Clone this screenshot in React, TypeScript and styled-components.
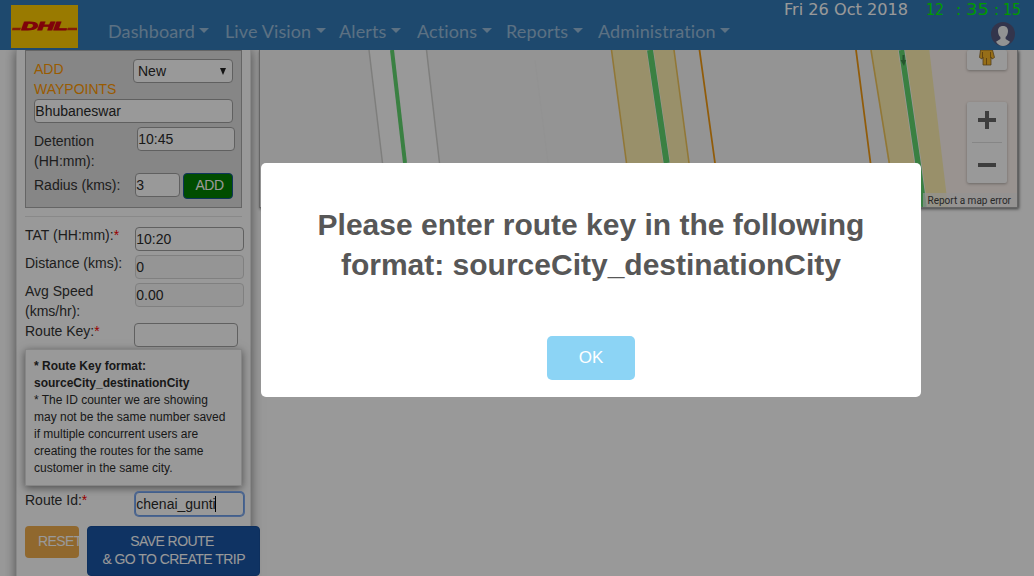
import React from "react";
import styled, { createGlobalStyle } from "styled-components";

const GlobalStyle = createGlobalStyle`
  * { box-sizing: border-box; }
  html, body { margin: 0; padding: 0; background: #fff; }
  body { font-family: "Liberation Sans", Arial, sans-serif; overflow: hidden; }
`;

const Page = styled.div`
  position: relative;
  width: 1034px;
  height: 576px;
  overflow: hidden;
  background: #fff;
  font-size: 14px;
  line-height: 20px;
  color: #333;
`;

/* ---------- Header ---------- */
const Navbar = styled.header`
  position: relative;
  z-index: 1;
  display: flex;
  height: 50px;
  background: #337ab7;
`;

const Logo = styled.svg`
  display: block;
  flex: none;
  width: 67px;
  height: 43px;
  margin: 5px 0 0 11px;
`;

const Menu = styled.nav`
  display: flex;
  flex: none;
  margin: 18px 0 0 30px;
  font: 18px/27px Lato, sans-serif;
  letter-spacing: 0.12px;
  color: rgba(255, 255, 255, 0.5);
`;

const MenuItem = styled.div<{ $width: number }>`
  flex: none;
  width: ${(p) => p.$width}px;
  white-space: nowrap;

  &::after {
    content: "";
    display: inline-block;
    margin-left: 4.6px;
    vertical-align: 4.6px;
    border-top: 5.4px solid;
    border-left: 5.4px solid transparent;
    border-right: 5.4px solid transparent;
  }
`;

const Status = styled.div`
  flex: 1;
  display: flex;
  flex-direction: column;
  align-items: flex-end;
  padding-right: 12px;
`;

const Clock = styled.div`
  display: flex;
  height: 20px;
  gap: 18px;
  font: 15px/20px "DejaVu Sans", sans-serif;
  margin-left: -60px;
`;

const DateText = styled.svg`
  display: block;
  width: 123px;
  height: 20px;
  fill: #fff;
`;

const TimeText = styled.svg`
  display: block;
  width: 96px;
  height: 20px;
  fill: #00ff00;
`;

const Avatar = styled.svg`
  display: block;
  width: 24px;
  height: 24px;
  margin: 2px 7px 0 0;
`;

/* ---------- Body ---------- */
const Content = styled.main`
  display: flex;
  align-items: flex-start;
  height: 526px;
`;

const Sidebar = styled.section`
  flex: none;
  width: 235px;
  height: 540px;
  margin-left: 16px;
  padding: 0 8px;
  border: 1px solid #e4e4e4;
  border-top: 0;
  box-shadow: 0 0 11px rgba(0, 0, 0, 0.5);
`;

const WaypointBox = styled.div`
  width: 217px;
  height: 158px;
  padding: 8px 8px 0;
  background: #dfdfdf;
  border: 1px solid #a9a9a9;
`;

const Row = styled.div<{ $h: number }>`
  display: flex;
  justify-content: space-between;
  height: ${(p) => p.$h}px;
`;

const Label = styled.label<{ $w?: number; $top?: number }>`
  flex: none;
  width: ${(p) => p.$w ?? 109}px;
  margin-top: ${(p) => p.$top ?? 0}px;
`;

const WaypointTitle = styled(Label)`
  color: #ff9800;
`;

const Required = styled.span`
  color: #f00;
`;

const Field = styled.div<{
  $w: number;
  $right?: number;
  $top?: number;
  $state?: "disabled" | "focus";
}>`
  flex: none;
  display: flex;
  align-items: center;
  width: ${(p) => p.$w}px;
  height: 24px;
  margin: ${(p) => p.$top ?? 0}px ${(p) => p.$right ?? 0}px 0 0;
  padding: 0 0.3px;
  border: 1px solid
    ${(p) => (p.$state === "disabled" ? "#d6d6d6" : p.$state === "focus" ? "#6f9fe8" : "#a0a0a0")};
  border-radius: 4px;
  background: ${(p) => (p.$state === "disabled" ? "#f8f8f8" : "#fff")};
  ${(p) => p.$state === "focus" && "box-shadow: 0 0 0 1px #80aaf0;"}
  color: #2b2b2b;
`;

const Select = styled(Field)`
  justify-content: space-between;
  padding: 0 6px 0 4px;
`;

const Arrow = styled.svg`
  width: 6px;
  height: 7px;
`;

const Caret = styled.span`
  width: 1px;
  height: 16px;
  margin-left: -0.5px;
  background: #000;
`;

const AddButton = styled.button`
  width: 50px;
  height: 26px;
  padding: 0 0 2px 3px;
  border: 1px solid #1a5799;
  border-radius: 4px;
  background: #008000;
  color: #fff;
  font: 14px "Liberation Sans", Arial, sans-serif;
  letter-spacing: -0.5px;
`;

const Divider = styled.div`
  width: 217px;
  height: 1px;
  margin-top: 8px;
  background: #e5e5e5;
`;

const FormBody = styled.div`
  width: 219px;
  padding-top: 8px;
`;

const Note = styled.div`
  width: 217px;
  height: 137px;
  padding: 8px 8px;
  border: 1px solid #e0e0e0;
  background: #fff;
  box-shadow: 0 2px 8px rgba(0, 0, 0, 0.5);
  font-size: 12px;
  line-height: 17px;
  white-space: nowrap;
  color: #2b2b2b;
`;

const Actions = styled.div`
  display: flex;
  align-items: flex-start;
  gap: 8px;
`;

const ResetButton = styled.button`
  flex: none;
  width: 54px;
  height: 32px;
  padding: 0 0 2px 13px;
  overflow: hidden;
  border: 0;
  border-radius: 4px;
  background: #f0ad4e;
  color: #fff;
  text-align: left;
  font: 14px "Liberation Sans", Arial, sans-serif;
  letter-spacing: -0.6px;
`;

const SaveButton = styled.button`
  flex: none;
  width: 173px;
  height: 50px;
  padding: 0 3px 2px 0;
  border: 1px solid #174f9c;
  border-radius: 4px;
  background: #1a55a5;
  color: #fff;
  font: 14px/18px "Liberation Sans", Arial, sans-serif;
  letter-spacing: -0.55px;
`;

/* ---------- Map ---------- */
const MapFrame = styled.section`
  position: relative;
  flex: none;
  width: 759px;
  height: 158px;
  margin-left: 8px;
  border: 1px solid #a8a8a8;
  border-top: 0;
  box-shadow: 1px 1px 3px rgba(0, 0, 0, 0.6);
`;

const MapDrawing = styled.svg`
  display: block;
  width: 757px;
  height: 157px;
`;

const MapControls = styled.div`
  position: absolute;
  top: 0;
  right: 10px;
  display: flex;
  flex-direction: column;
  gap: 32px;
`;

const ControlCard = styled.div<{ $h: number }>`
  width: 40px;
  height: ${(p) => p.$h}px;
  border-radius: 2px;
  background: #fff;
  box-shadow: 0 1px 3px rgba(0, 0, 0, 0.3);

  svg {
    display: block;
  }
`;

const MapCredit = styled.div`
  position: absolute;
  right: 0;
  bottom: 0;
  height: 14px;
  padding: 1px 6px 0 5px;
  background: rgba(245, 245, 245, 0.7);
  font: 10px/14px Roboto, sans-serif;
  color: #444;
`;

/* ---------- Dialog ---------- */
const Backdrop = styled.div`
  position: absolute;
  z-index: 2;
  inset: 0;
  background: rgba(0, 0, 0, 0.4);
`;

const Dialog = styled.div`
  position: absolute;
  z-index: 3;
  left: 261px;
  top: 163px;
  display: flex;
  flex-direction: column;
  align-items: center;
  width: 660px;
  height: 234px;
  padding-top: 42px;
  border-radius: 5px;
  background: #fff;
`;

const DialogTitle = styled.h2`
  margin: 0 0 51px;
  font-size: 30px;
  line-height: 40px;
  font-weight: 600;
  text-align: center;
  color: #575757;
`;

const OkButton = styled.button`
  width: 88px;
  height: 44px;
  padding: 0;
  border: 0;
  border-radius: 5px;
  background: #8cd4f5;
  color: #fff;
  font: 17px "Liberation Sans", Arial, sans-serif;
`;

const menu = [
  { name: "Dashboard", width: 117 },
  { name: "Live Vision", width: 114 },
  { name: "Alerts", width: 78 },
  { name: "Actions", width: 89 },
  { name: "Reports", width: 92 },
  { name: "Administration", width: 136 },
];

export default function App() {
  return (
    <Page>
      <GlobalStyle />
      <Navbar>
        <Logo viewBox="0 0 67 43">
          <rect width="67" height="43" fill="#fc0" />
          <text
            x="10.5"
            y="24.9"
            textLength="46"
            lengthAdjust="spacingAndGlyphs"
            fontFamily="Liberation Sans, sans-serif"
            fontSize="11.500"
            fontWeight="bold"
            fontStyle="italic"
            fill="#d40511"
            stroke="#d40511"
            strokeWidth="1"
          >
            DHL
          </text>
          <path d="M1.500 22.700h8.500l-1 2.600H1zM57 22.700h9v2.600H56z" fill="#d8330c" />
        </Logo>
        <Menu>
          {menu.map((m) => (
            <MenuItem key={m.name} $width={m.width}>
              {m.name}
            </MenuItem>
          ))}
        </Menu>
        <Status>
          <Clock>
            <DateText viewBox="0 0 123 20">
              <text x="-1" y="15.200" textLength="124" lengthAdjust="spacingAndGlyphs">
                Fri 26 Oct 2018
              </text>
            </DateText>
            <TimeText viewBox="0 0 96 20">
              <text x="0" y="15.200" textLength="18" lengthAdjust="spacingAndGlyphs">12</text>
              <text x="30" y="15.200">:</text>
              <text x="40" y="15.200" textLength="23" lengthAdjust="spacingAndGlyphs">35</text>
              <text x="68" y="15.200">:</text>
              <text x="77" y="15.200" textLength="18" lengthAdjust="spacingAndGlyphs">15</text>
            </TimeText>
          </Clock>
          <Avatar viewBox="0 0 24 24">
            <circle cx="12" cy="12" r="12" fill="#56597f" />
            <path
              d="M12 4c-3.4 0-5 2.3-5 5 0 2.600 1 4.700 2.400 6v2L5 19.700Q8 24 12 24t7-4.300L14.600 17v-2C16 13.700 17 11.600 17 9c0-2.700-1.600-5-5-5z"
              fill="#f3f6f6"
            />
          </Avatar>
        </Status>
      </Navbar>

      <Content>
        <Sidebar>
          <WaypointBox>
            <Row $h={40}>
              <WaypointTitle $w={90}>
                ADD WAYPOINTS
              </WaypointTitle>
              <Select $w={100}>
                New
                <Arrow viewBox="0 0 6 7">
                  <path d="M0 0h6L3 7z" fill="#222" />
                </Arrow>
              </Select>
            </Row>
            <Row $h={28}>
              <Field $w={199}>Bhubaneswar</Field>
            </Row>
            <Row $h={46}>
              <Label $w={90} $top={4}>
                Detention (HH:mm):
              </Label>
              <Field $w={98} $right={-2}>
                10:45
              </Field>
            </Row>
            <Row $h={30}>
              <Label $w={101} $top={2}>
                Radius (kms):
              </Label>
              <Field $w={45} $right={3}>3</Field>
              <AddButton>ADD</AddButton>
            </Row>
          </WaypointBox>
          <Divider />
          <FormBody>
            <Row $h={28}>
              <Label>
                TAT (HH:mm):<Required>*</Required>
              </Label>
              <Field $w={109} $top={2}>
                10:20
              </Field>
            </Row>
            <Row $h={28}>
              <Label>Distance (kms):</Label>
              <Field $w={109} $top={2} $state="disabled">
                0
              </Field>
            </Row>
            <Row $h={40}>
              <Label>
                Avg Speed
                <br />
                (kms/hr):
              </Label>
              <Field $w={109} $top={2} $state="disabled">
                0.00
              </Field>
            </Row>
            <Row $h={28}>
              <Label>
                Route Key:<Required>*</Required>
              </Label>
              <Field $w={104} $top={2} $right={6} />
            </Row>
            <Note>
              <b>
                * Route Key format:
                <br />
                sourceCity_destinationCity
              </b>
              <br />
              * The ID counter we are showing
              <br />
              may not be the same number saved
              <br />
              if multiple concurrent users are
              <br />
              creating the routes for the same
              <br />
              customer in the same city.
            </Note>
            <Row $h={40}>
              <Label $top={4}>
                Route Id:<Required>*</Required>
              </Label>
              <Field $w={109} $top={6} $state="focus">
                chenai_gunti
                <Caret />
              </Field>
            </Row>
            <Actions>
              <ResetButton>RESET</ResetButton>
              <SaveButton>
                SAVE ROUTE
                <br />
                &nbsp;&amp; GO TO CREATE TRIP
              </SaveButton>
            </Actions>
          </FormBody>
        </Sidebar>

        <MapFrame>
          <MapDrawing viewBox="260 50 757 157" fill="none">
            <rect x="260" y="50" width="758" height="157" fill="#f7f7f7" />
            <path d="M369 50L382.500 163H439.500L426.500 50z" fill="#fff" />
            <path d="M369 50L382.500 163M426.500 50L439.500 163" stroke="#d3d3d0" strokeWidth="1.500" />
            <path d="M392 50L405 163" stroke="#61d56f" strokeWidth="4" />
            <path d="M535 60L548 163" stroke="#f4f4f4" />
            <path d="M611.500 50L626.500 163H689L674 50z" fill="#fff1b1" />
            <path d="M611.500 50L626.500 163M674 50L689 163" stroke="#f2c75c" strokeWidth="1.600" />
            <path d="M650 50L666.700 163" stroke="#fff" strokeWidth="7" />
            <path d="M650 50L666.700 163" stroke="#61d56f" strokeWidth="6" />
            <path d="M699.500 50L715 163M856 50L870.500 163" stroke="#f29a12" strokeWidth="1.800" />
            <path d="M929.300 50L948 207H1018V50z" fill="#fff5f0" />
            <path d="M871 50L895 207H948L929.300 50z" fill="#fff1b1" />
            <path d="M871 50L889.300 163" stroke="#f2c75c" strokeWidth="1.600" />
            <path d="M901.500 50L918 163L924 207" stroke="#fff" strokeWidth="7" />
            <path d="M901.500 50L918 163L924 207" stroke="#61d56f" strokeWidth="5.500" />
            <path d="M902.500 55v5h-2l3.500 6 2-6h-1.500v-5z" fill="#3d8c4b" />
          </MapDrawing>
          <MapControls>
            <ControlCard $h={20}>
              <svg viewBox="0 0 40 20" width="40" height="20">
                <path
                  d="M13.500 0h12l2 7.500-2.500 1.500-1-2v8h-8V7l-1 2-2.500-1.500z"
                  fill="#fbb829"
                  stroke="#8a6a30"
                  strokeWidth="0.800"
                />
                <path d="M19.500 8v7M15.500 2v6M23.500 2v6" stroke="#a7731b" />
              </svg>
            </ControlCard>
            <ControlCard $h={81}>
              <svg viewBox="0 0 40 81" width="40" height="81">
                <path d="M11 18h18M20 9v18M11 63h18" stroke="#666" strokeWidth="4" />
                <path d="M5 40.500h30" stroke="#e0e0e0" />
              </svg>
            </ControlCard>
          </MapControls>
          <MapCredit>Report a map error</MapCredit>
        </MapFrame>
      </Content>

      <Backdrop />
      <Dialog>
        <DialogTitle>
          Please enter route key in the following
          <br />
          format: sourceCity_destinationCity
        </DialogTitle>
        <OkButton>OK</OkButton>
      </Dialog>
    </Page>
  );
}
